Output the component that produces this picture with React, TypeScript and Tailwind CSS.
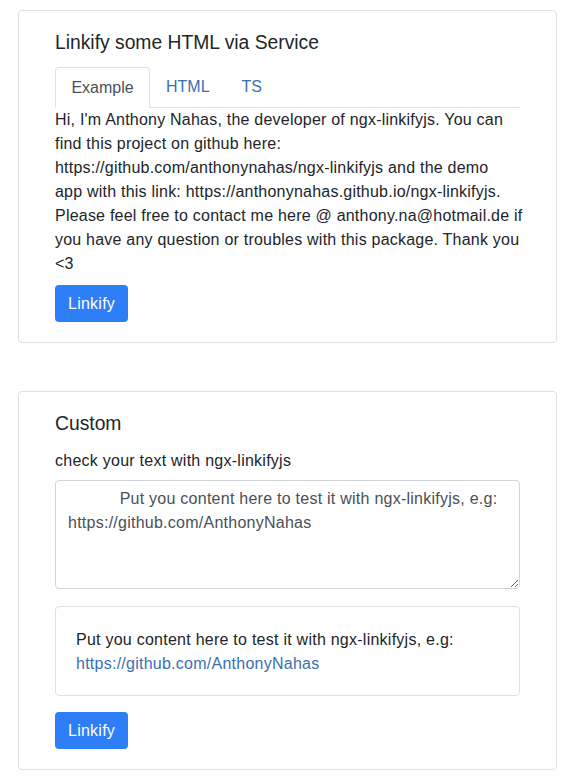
import React from 'react';

const font = { fontFamily: '"Liberation Sans", Arial, sans-serif' };

const tabs = ['Example', 'HTML', 'TS'];

const introLines = [
  "Hi, I'm Anthony Nahas, the developer of ngx-linkifyjs. You can",
  'find this project on github here:',
  'https://github.com/anthonynahas/ngx-linkifyjs and the demo',
  'app with this link: https://anthonynahas.github.io/ngx-linkifyjs.',
  'Please feel free to contact me here @ anthony.na@hotmail.de if',
  'you have any question or troubles with this package. Thank you',
  '<3',
];

const App: React.FC = () => {
  return (
    <div className="bg-white min-h-[780px] pt-[10px] pl-[18px] pr-[17px] text-[#212529] font-['Liberation_Sans',Arial,sans-serif]">
      {/* service card */}
      <div className="border border-[#dfdfdf] rounded px-9 pt-5 pb-5">
        <h3 className="text-[19.3px] leading-6 mb-3">Linkify some HTML via Service</h3>
        <div className="flex border-b border-[#dee2e6] h-[41px]">
          {tabs.map((tab, i) => (
            <div
              key={tab}
              className={
                i === 0
                  ? 'flex items-center justify-center border border-[#dee2e6] border-b-white rounded-t -mb-px text-[#495057] bg-white w-[95px]'
                  : 'px-4 flex items-center text-[#3a6fb4]'
              }
            >
              {tab}
            </div>
          ))}
        </div>
        <p className="text-[16px] leading-6 tracking-[0.22px] mt-0">
          {introLines.map((line) => (
            <span key={line} className="block whitespace-nowrap">
              {line}
            </span>
          ))}
        </p>
        <button className="mt-[9px] bg-[#2d7ef7] text-white rounded px-[13px] h-[37px] text-[16px] tracking-[0.25px]">
          Linkify
        </button>
      </div>

      {/* custom card */}
      <div className="border border-[#dfdfdf] rounded px-9 pt-5 pb-5 mt-[48px]">
        <h3 className="text-[19.3px] leading-6 mb-[13px]">Custom</h3>
        <p className="text-[16px] leading-6 tracking-[0.25px]">check your text with ngx-linkifyjs</p>
        <textarea
          className="mt-[7px] block w-full h-[109px] border border-[#ced4da] rounded px-3 py-[6px] text-[16px] leading-6 tracking-[0.25px] text-[#495057] resize-y"
          style={font}
          defaultValue={'           Put you content here to test it with ngx-linkifyjs, e.g: https://github.com/AnthonyNahas'}
        />
        <div className="mt-[17px] border border-[#dee2e6] rounded pl-5 pr-5 pt-[21px] pb-[19px] text-[16px] leading-6 tracking-[0.25px]">
          Put you content here to test it with ngx-linkifyjs, e.g:{' '}
          <a className="text-[#3a6fb4]">https://github.com/AnthonyNahas</a>
        </div>
        <button className="mt-[16px] bg-[#2d7ef7] text-white rounded px-[13px] h-[37px] text-[16px] tracking-[0.25px]">
          Linkify
        </button>
      </div>
    </div>
  );
};

export default App;
